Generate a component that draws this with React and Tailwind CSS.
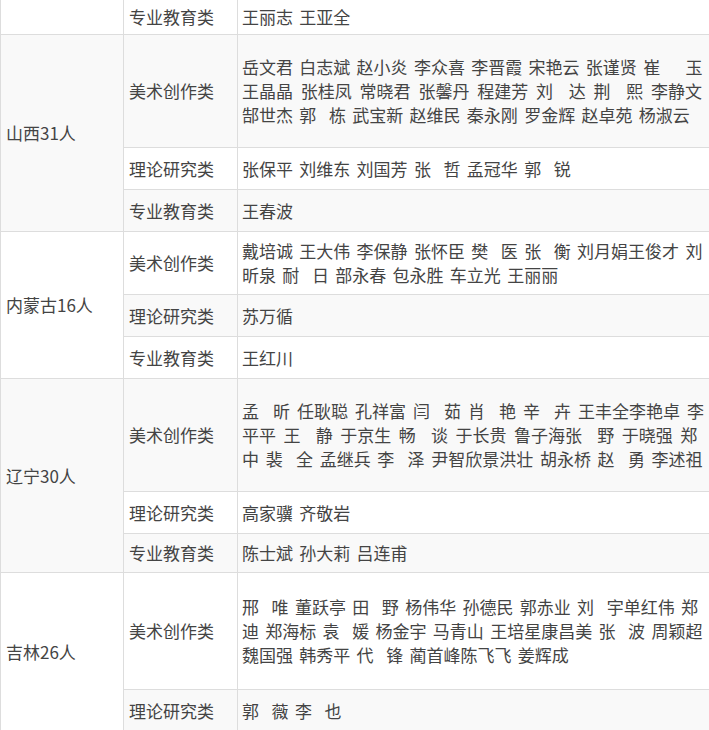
import React from "react";

const GRAY = "bg-[#f9f9f9]";
const WS = {
  base: "[word-spacing:2.5px]",
  w4: "[word-spacing:4px]",
  w32: "[word-spacing:3.2px]",
  w375: "[word-spacing:3.75px]",
  w285: "[word-spacing:2.85px]",
};

const L = (t, ws = "base") => ({ t, ws });

const groups = [
  {
    name: "",
    rows: [{ cat: "专业教育类", h: "h-[35px]", lines: [L("王丽志 王亚全")] }],
  },
  {
    name: "山西31人",
    rows: [
      {
        cat: "美术创作类",
        h: "h-[113px]",
        lines: [
          L("岳文君 白志斌 赵小炎 李众喜 李晋霞 宋艳云 张谨贤 崔    玉"),
          L("王晶晶 张桂凤 常晓君 张馨丹 程建芳 刘  达 荆  熙 李静文", "w4"),
          L("郜世杰 郭  栋 武宝新 赵维民 秦永刚 罗金辉 赵卓苑 杨淑云"),
        ],
      },
      { cat: "理论研究类", h: "h-[42px]", lines: [L("张保平 刘维东 刘国芳 张  哲 孟冠华 郭  锐")] },
      { cat: "专业教育类", h: "h-[42px]", lines: [L("王春波")] },
    ],
  },
  {
    name: "内蒙古16人",
    rows: [
      {
        cat: "美术创作类",
        h: "h-[63px]",
        lines: [
          L("戴培诚 王大伟 李保静 张怀臣 樊  医 张  衡 刘月娟王俊才 刘"),
          L("昕泉 耐  日 部永春 包永胜 车立光 王丽丽"),
        ],
      },
      { cat: "理论研究类", h: "h-[42px]", lines: [L("苏万循")] },
      { cat: "专业教育类", h: "h-[42px]", lines: [L("王红川")] },
    ],
  },
  {
    name: "辽宁30人",
    rows: [
      {
        cat: "美术创作类",
        h: "h-[113px]",
        lines: [
          L("孟  昕 任耿聪 孔祥富 闫  茹 肖  艳 辛  卉 王丰全李艳卓 李", "w32"),
          L("平平 王  静 于京生 畅  谈 于长贵 鲁子海张  野 于晓强 郑", "w375"),
          L("中 裴  全 孟继兵 李  泽 尹智欣景洪壮 胡永桥 赵  勇 李述祖", "w285"),
        ],
      },
      { cat: "理论研究类", h: "h-[42px]", lines: [L("高家骥 齐敬岩")] },
      { cat: "专业教育类", h: "h-[39px]", lines: [L("陈士斌 孙大莉 吕连甫")] },
    ],
  },
  {
    name: "吉林26人",
    rows: [
      {
        cat: "美术创作类",
        h: "h-[117px]",
        lines: [
          L("邢  唯 董跃亭 田  野 杨伟华 孙德民 郭赤业 刘  宇单红伟 郑"),
          L("迪 郑海标 袁  媛 杨金宇 马青山 王培星康昌美 张  波 周颖超"),
          L("魏国强 韩秀平 代  锋 蔺首峰陈飞飞 姜辉成"),
        ],
      },
      { cat: "理论研究类", h: "h-[42px]", lines: [L("郭  薇 李  也")] },
    ],
  },
];

export default function App() {
  let stripe = 0;
  const built = groups.map((g) => {
    const rows = g.rows.map((r) => {
      const gray = stripe % 2 === 1;
      stripe += 1;
      return { ...r, gray };
    });
    return { ...g, rows };
  });

  return (
    <div
      className="w-[709px] overflow-hidden bg-white text-[#444444] text-[17px] leading-[24px]"
      style={{ fontFamily: '"Noto Sans CJK SC", "Noto Sans", sans-serif' }}
    >
      <div className="w-[712px] flex flex-col">
        {built.map((g, gi) => (
          <div key={gi} className="flex">
            <div
              className={`w-[124px] shrink-0 flex items-center pl-[5px] border-l border-r border-b border-[#dddddd] ${
                g.rows[0].gray ? GRAY : "bg-white"
              }`}
            >
              {g.name}
            </div>
            <div className="flex-1 flex flex-col">
              {g.rows.map((r, ri) => (
                <div
                  key={ri}
                  className={`${r.h} flex border-b border-[#dddddd] ${r.gray ? GRAY : "bg-white"}`}
                >
                  <div className="w-[114px] shrink-0 flex items-center pl-[5px] border-r border-[#dddddd]">
                    {r.cat}
                  </div>
                  <div className="flex-1 flex flex-col justify-center pl-[4px]">
                    {r.lines.map((l, li) => (
                      <div key={li} className={`whitespace-pre ${WS[l.ws]}`}>
                        {l.t}
                      </div>
                    ))}
                  </div>
                </div>
              ))}
            </div>
          </div>
        ))}
      </div>
    </div>
  );
}
